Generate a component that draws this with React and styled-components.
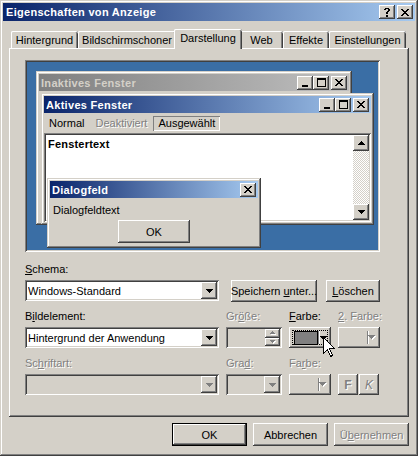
import React from 'react';
import styled, { createGlobalStyle, css } from 'styled-components';

const face = '#d4d0c8';
const shadow = '#808080';
const dark = '#404040';

const GlobalStyle = createGlobalStyle`
  html, body { margin: 0; padding: 0; background: ${face}; }
  body {
    font-family: "Liberation Sans", Arial, sans-serif;
    font-size: 11px;
    color: #000;
  }
`;

const frame = css`
  box-shadow: inset -1px -1px ${dark}, inset 1px 1px ${face},
    inset -2px -2px ${shadow}, inset 2px 2px #fff;
`;
const raised = css`
  box-shadow: inset -1px -1px ${dark}, inset 1px 1px #fff,
    inset -2px -2px ${shadow}, inset 2px 2px ${face};
`;
const sunken = css`
  box-shadow: inset 1px 1px ${shadow}, inset -1px -1px #fff,
    inset 2px 2px ${dark}, inset -2px -2px ${face};
`;
const disabledText = css`
  color: ${shadow};
  text-shadow: 1px 1px #fff;
`;

// pixel glyphs for the little window-chrome bitmaps
const Pix = ({ rows, color = '#000', emboss = false }) => {
  const w = rows[0].length;
  const h = rows.length;
  const d = [];
  rows.forEach((r, y) =>
    [...r].forEach((c, x) => {
      if (c === '#') d.push(`M${x} ${y}h1v1h-1z`);
    })
  );
  const path = d.join('');
  return (
    <svg width={w + (emboss ? 1 : 0)} height={h + (emboss ? 1 : 0)} shapeRendering="crispEdges">
      {emboss && <path d={path} fill="#fff" transform="translate(1 1)" />}
      <path d={path} fill={emboss ? shadow : color} />
    </svg>
  );
};

const G = {
  close: ['##....##', '.##..##.', '..####..', '...##...', '..####..', '.##..##.', '##....##'],
  min: ['######', '######'],
  max: ['#########', '#########', '#.......#', '#.......#', '#.......#', '#.......#', '#.......#', '#.......#', '#########'],
  help: ['.####.', '##..##', '....##', '...##.', '..##..', '..##..', '......', '..##..', '..##..'],
  down: ['#######', '.#####.', '..###..', '...#...'],
  up: ['...#...', '..###..', '.#####.', '#######'],
  tinyUp: ['..#..', '.###.', '#####'],
  tinyDown: ['#####', '.###.', '..#..'],
};

const Window = styled.div`
  position: relative;
  width: 418px;
  height: 456px;
  box-sizing: border-box;
  padding: 3px;
  background: ${face};
  ${frame}
  display: flex;
  flex-direction: column;
  overflow: hidden;
`;

const TitleBar = styled.div`
  height: ${(p) => p.$h || 18}px;
  flex-shrink: 0;
  display: flex;
  align-items: center;
  padding: 0 2px 0 ${(p) => p.$pl ?? 3}px;
  background: ${(p) =>
    p.$inactive
      ? 'linear-gradient(to right, #808080, #c0c0c0)'
      : 'linear-gradient(to right, #0a246a, #a6caf0)'};
  color: ${(p) => (p.$inactive ? face : '#fff')};
  font-weight: bold;
  letter-spacing: 0.3px;
  white-space: nowrap;
`;

const TitleText = styled.span`
  flex: 1;
  overflow: hidden;
`;

const CaptionButtons = styled.div`
  display: flex;
  gap: 2px;
`;

const CaptionGroup = styled.div`
  display: flex;
`;

const CaptionButton = styled.div`
  width: 16px;
  height: 14px;
  background: ${face};
  ${raised}
  display: flex;
  align-items: ${(p) => p.$align || 'center'};
  justify-content: center;
  box-sizing: border-box;
  padding: ${(p) => p.$pad || 0};
`;

const TabRow = styled.div`
  display: flex;
  align-items: flex-end;
  height: 19px;
  margin: 8px 0 0 6px;
  padding-left: 2px;
  position: relative;
  z-index: 2;
`;

const Tab = styled.div`
  width: ${(p) => p.$w + (p.$active ? 4 : 0)}px;
  height: ${(p) => (p.$active ? 20 : 17)}px;
  margin: 0 ${(p) => (p.$active ? -2 : 0)}px ${(p) => (p.$active ? -1 : 0)}px;
  position: relative;
  z-index: ${(p) => (p.$active ? 2 : 1)};
  box-sizing: border-box;
  display: flex;
  align-items: center;
  justify-content: center;
  padding-bottom: ${(p) => (p.$active ? 2 : 0)}px;
  background: ${face};
  border-radius: 2px 2px 0 0;
  box-shadow: inset 1px 0 #fff, inset 0 1px #fff, inset -1px 0 ${dark}, inset -2px 0 ${shadow};
  white-space: nowrap;
`;

const Panel = styled.div`
  width: 400px;
  height: 369px;
  margin-left: 6px;
  box-sizing: border-box;
  padding: 12px 0 0 16px;
  box-shadow: inset -1px -1px ${dark}, inset 1px 1px #fff, inset -2px -2px ${shadow};
`;

const Preview = styled.div`
  position: relative;
  width: 355px;
  height: 192px;
  background: #3a6ea5;
  ${sunken}
`;

const MiniWindow = styled.div`
  position: absolute;
  left: ${(p) => p.$x}px;
  top: ${(p) => p.$y}px;
  width: ${(p) => p.$w}px;
  height: ${(p) => p.$h}px;
  box-sizing: border-box;
  padding: 3px;
  background: ${face};
  ${frame}
  display: flex;
  flex-direction: column;
`;

const MenuBar = styled.div`
  display: flex;
  height: 18px;
  align-items: center;
  margin-top: 1px;
`;

const MenuItem = styled.span`
  padding: 1px 5px 2px;
  margin-right: 1px;
  ${(p) => p.$disabled && disabledText}
  ${(p) =>
    p.$selected &&
    css`
      box-shadow: inset 1px 1px ${shadow}, inset -1px -1px #fff;
    `}
`;

const TextArea = styled.div`
  flex: 1;
  margin: 1px 0 0;
  display: flex;
  background: #fff;
  ${sunken}
  padding: 2px;
`;

const TextBody = styled.div`
  flex: 1;
  padding: 3px 2px;
  font-weight: bold;
  letter-spacing: 0.2px;
`;

const ScrollBar = styled.div`
  width: 16px;
  display: flex;
  flex-direction: column;
  background: repeating-conic-gradient(#fff 0 25%, ${face} 0 50%) 0 0 / 2px 2px;
`;

const ScrollButton = styled.div`
  width: 16px;
  height: 16px;
  background: ${face};
  ${raised}
  display: flex;
  align-items: center;
  justify-content: center;
  margin-top: ${(p) => (p.$bottom ? 'auto' : 0)};
`;

const DialogText = styled.div`
  padding: 6px 0 0 3px;
  height: 13px;
`;

const Button = styled.div`
  width: ${(p) => p.$w}px;
  height: ${(p) => p.$h || 23}px;
  box-sizing: border-box;
  display: flex;
  align-items: center;
  justify-content: center;
  background: ${face};
  ${(p) =>
    p.$default
      ? css`
          box-shadow: inset 0 0 0 1px #000, inset -2px -2px ${dark}, inset 2px 2px #fff,
            inset -3px -3px ${shadow};
        `
      : raised}
  ${(p) => p.$disabled && disabledText}
  white-space: nowrap;
  flex-shrink: 0;
`;

const DialogButtonRow = styled.div`
  display: flex;
  justify-content: center;
  margin-top: 3px;
`;

const FormRow = styled.div`
  display: grid;
  grid-template-columns: 194px 56px 42px 42px;
  column-gap: 7px;
  margin-top: ${(p) => p.$top}px;
`;

const Field = styled.div`
  display: flex;
  flex-direction: column;
  gap: 4px;
  margin-top: ${(p) => p.$top || 0}px;
`;

const Label = styled.div`
  height: 13px;
  line-height: 13px;
  white-space: nowrap;
  ${(p) => p.$disabled && disabledText}
`;

const Combo = styled.div`
  width: ${(p) => (p.$w ? `${p.$w}px` : 'auto')};
  height: 21px;
  box-sizing: border-box;
  display: flex;
  align-items: center;
  padding: 2px 2px 2px 3px;
  background: ${(p) => (p.$disabled ? face : '#fff')};
  ${sunken}
`;

const ComboText = styled.span`
  flex: 1;
  white-space: nowrap;
  overflow: hidden;
`;

const DropButton = styled.div`
  width: 16px;
  height: 17px;
  background: ${face};
  ${raised}
  display: flex;
  align-items: center;
  justify-content: center;
  flex-shrink: 0;
`;

const SpinButtons = styled.div`
  width: 15px;
  height: 17px;
  display: flex;
  flex-direction: column;
  margin-left: auto;
`;

const SpinHalf = styled.div`
  flex: 1;
  background: ${face};
  ${raised}
  display: flex;
  align-items: center;
  justify-content: center;
`;

const ButtonsRow = styled.div`
  display: flex;
  gap: ${(p) => p.$gap}px;
  margin-left: ${(p) => p.$left || 0}px;
`;

const ColorButton = styled.div`
  height: 21px;
  box-sizing: border-box;
  display: flex;
  align-items: center;
  padding: 3px;
  background: ${face};
  ${raised}
`;

const ColorFocus = styled.div`
  flex: 1;
  height: 100%;
  box-sizing: border-box;
  display: flex;
  align-items: center;
  padding: 1px;
  outline: ${(p) => (p.$focus ? '1px dotted #000' : 'none')};
  outline-offset: -1px;
`;

const Swatch = styled.div`
  width: 22px;
  height: 12px;
  margin-left: 1px;
  background: #808080;
  border: 1px solid #000;
`;

const ColorArrow = styled.div`
  margin-left: auto;
  height: 100%;
  width: 9px;
  display: flex;
  align-items: center;
  justify-content: flex-end;
  box-shadow: inset 1px 0 ${shadow}, inset 2px 0 #fff;
`;

const StyleButton = styled.div`
  width: 20px;
  height: 21px;
  background: ${face};
  ${raised}
  display: flex;
  align-items: center;
  justify-content: center;
  ${disabledText}
  font-weight: ${(p) => (p.$bold ? 'bold' : 'normal')};
  font-style: ${(p) => (p.$italic ? 'italic' : 'normal')};
  font-size: 12px;
`;

const StyleGroup = styled.div`
  display: flex;
  gap: 1px;
  align-self: end;
`;

const Footer = styled.div`
  display: flex;
  justify-content: flex-end;
  gap: 6px;
  margin: 6px 6px 0 0;
`;

const Cursor = styled.svg`
  position: absolute;
  left: 323px;
  top: 337px;
  z-index: 10;
`;

const Caption = ({ buttons }) => (
  <CaptionButtons>
    {buttons.includes('min') && (
      <CaptionGroup>
        <CaptionButton $align="flex-end" $pad="0 0 3px">
          <Pix rows={G.min} />
        </CaptionButton>
        <CaptionButton>
          <Pix rows={G.max} />
        </CaptionButton>
      </CaptionGroup>
    )}
    {buttons.includes('help') && (
      <CaptionButton>
        <Pix rows={G.help} />
      </CaptionButton>
    )}
    <CaptionButton>
      <Pix rows={G.close} />
    </CaptionButton>
  </CaptionButtons>
);

const Drop = ({ disabled }) => (
  <DropButton>
    <Pix rows={G.down} color={disabled ? shadow : '#000'} />
  </DropButton>
);

const tabs = [
  ['Hintergrund', 67],
  ['Bildschirmschoner', 98],
  ['Darstellung', 64],
  ['Web', 43],
  ['Effekte', 46],
  ['Einstellungen', 77],
];

export default function App() {
  return (
    <>
      <GlobalStyle />
      <Window>
        <TitleBar>
          <TitleText>Eigenschaften von Anzeige</TitleText>
          <Caption buttons={['help']} />
        </TitleBar>

        <TabRow>
          {tabs.map(([name, w]) => (
            <Tab key={name} $w={w} $active={name === 'Darstellung'}>
              {name}
            </Tab>
          ))}
        </TabRow>

        <Panel>
          <Preview>
            <MiniWindow $x={11} $y={11} $w={316} $h={154}>
              <TitleBar $inactive $h={17} $pl={2}>
                <TitleText>Inaktives Fenster</TitleText>
                <Caption buttons={['min']} />
              </TitleBar>
            </MiniWindow>

            <MiniWindow $x={16} $y={33} $w={333} $h={132}>
              <TitleBar $h={17} $pl={2}>
                <TitleText>Aktives Fenster</TitleText>
                <Caption buttons={['min']} />
              </TitleBar>
              <MenuBar>
                <MenuItem>Normal</MenuItem>
                <MenuItem $disabled>Deaktiviert</MenuItem>
                <MenuItem $selected>Ausgewählt</MenuItem>
              </MenuBar>
              <TextArea>
                <TextBody>Fenstertext</TextBody>
                <ScrollBar>
                  <ScrollButton>
                    <Pix rows={G.up} />
                  </ScrollButton>
                  <ScrollButton $bottom>
                    <Pix rows={G.down} />
                  </ScrollButton>
                </ScrollBar>
              </TextArea>
            </MiniWindow>

            <MiniWindow $x={22} $y={118} $w={214} $h={70}>
              <TitleBar $h={17} $pl={2}>
                <TitleText>Dialogfeld</TitleText>
                <Caption buttons={[]} />
              </TitleBar>
              <DialogText>Dialogfeldtext</DialogText>
              <DialogButtonRow>
                <Button $w={72}>OK</Button>
              </DialogButtonRow>
            </MiniWindow>
          </Preview>

          <Field $top={11}>
            <Label>
              <u>S</u>chema:
            </Label>
            <ButtonsRow $gap={0}>
              <Combo $w={194}>
                <ComboText>Windows-Standard</ComboText>
                <Drop />
              </Combo>
              <ButtonsRow $gap={9} $left={12}>
                <Button $w={86} $h={22}>
                  <span>
                    Speichern <u>u</u>nter...
                  </span>
                </Button>
                <Button $w={54} $h={22}>
                  <span>
                    <u>L</u>öschen
                  </span>
                </Button>
              </ButtonsRow>
            </ButtonsRow>
          </Field>

          <FormRow $top={8}>
            <Field>
              <Label>
                B<u>i</u>ldelement:
              </Label>
              <Combo>
                <ComboText>Hintergrund der Anwendung</ComboText>
                <Drop />
              </Combo>
            </Field>
            <Field>
              <Label $disabled>
                Gr<u>ö</u>ße:
              </Label>
              <Combo $disabled>
                <SpinButtons>
                  <SpinHalf>
                    <Pix rows={G.tinyUp} emboss />
                  </SpinHalf>
                  <SpinHalf>
                    <Pix rows={G.tinyDown} emboss />
                  </SpinHalf>
                </SpinButtons>
              </Combo>
            </Field>
            <Field>
              <Label>
                <u>F</u>arbe:
              </Label>
              <ColorButton>
                <ColorFocus $focus>
                  <Swatch />
                  <ColorArrow>
                    <Pix rows={G.down} />
                  </ColorArrow>
                </ColorFocus>
              </ColorButton>
            </Field>
            <Field>
              <Label $disabled>
                <u>2</u>. Farbe:
              </Label>
              <ColorButton>
                <ColorFocus>
                  <ColorArrow>
                    <Pix rows={G.down} emboss />
                  </ColorArrow>
                </ColorFocus>
              </ColorButton>
            </Field>
          </FormRow>

          <FormRow $top={9}>
            <Field>
              <Label $disabled>
                Sc<u>h</u>riftart:
              </Label>
              <Combo $disabled>
                <ComboText />
                <Drop disabled />
              </Combo>
            </Field>
            <Field>
              <Label $disabled>
                Gra<u>d</u>:
              </Label>
              <Combo $disabled>
                <ComboText />
                <Drop disabled />
              </Combo>
            </Field>
            <Field>
              <Label $disabled>
                Fa<u>r</u>be:
              </Label>
              <ColorButton>
                <ColorFocus>
                  <ColorArrow>
                    <Pix rows={G.down} emboss />
                  </ColorArrow>
                </ColorFocus>
              </ColorButton>
            </Field>
            <StyleGroup>
              <StyleButton $bold>F</StyleButton>
              <StyleButton $italic>K</StyleButton>
            </StyleGroup>
          </FormRow>
        </Panel>

        <Footer>
          <Button $w={75} $default>
            OK
          </Button>
          <Button $w={75}>Abbrechen</Button>
          <Button $w={75} $disabled>
            <span>
              Ü<u>b</u>ernehmen
            </span>
          </Button>
        </Footer>

        <Cursor width="13" height="21" viewBox="0 0 13 21" shapeRendering="crispEdges">
          <path d="M0.5 0.5V16.5L4.5 12.5L7.5 19.5L9.5 18.5L6.5 11.5H11.5Z" fill="#fff" stroke="#000" />
        </Cursor>
      </Window>
    </>
  );
}
